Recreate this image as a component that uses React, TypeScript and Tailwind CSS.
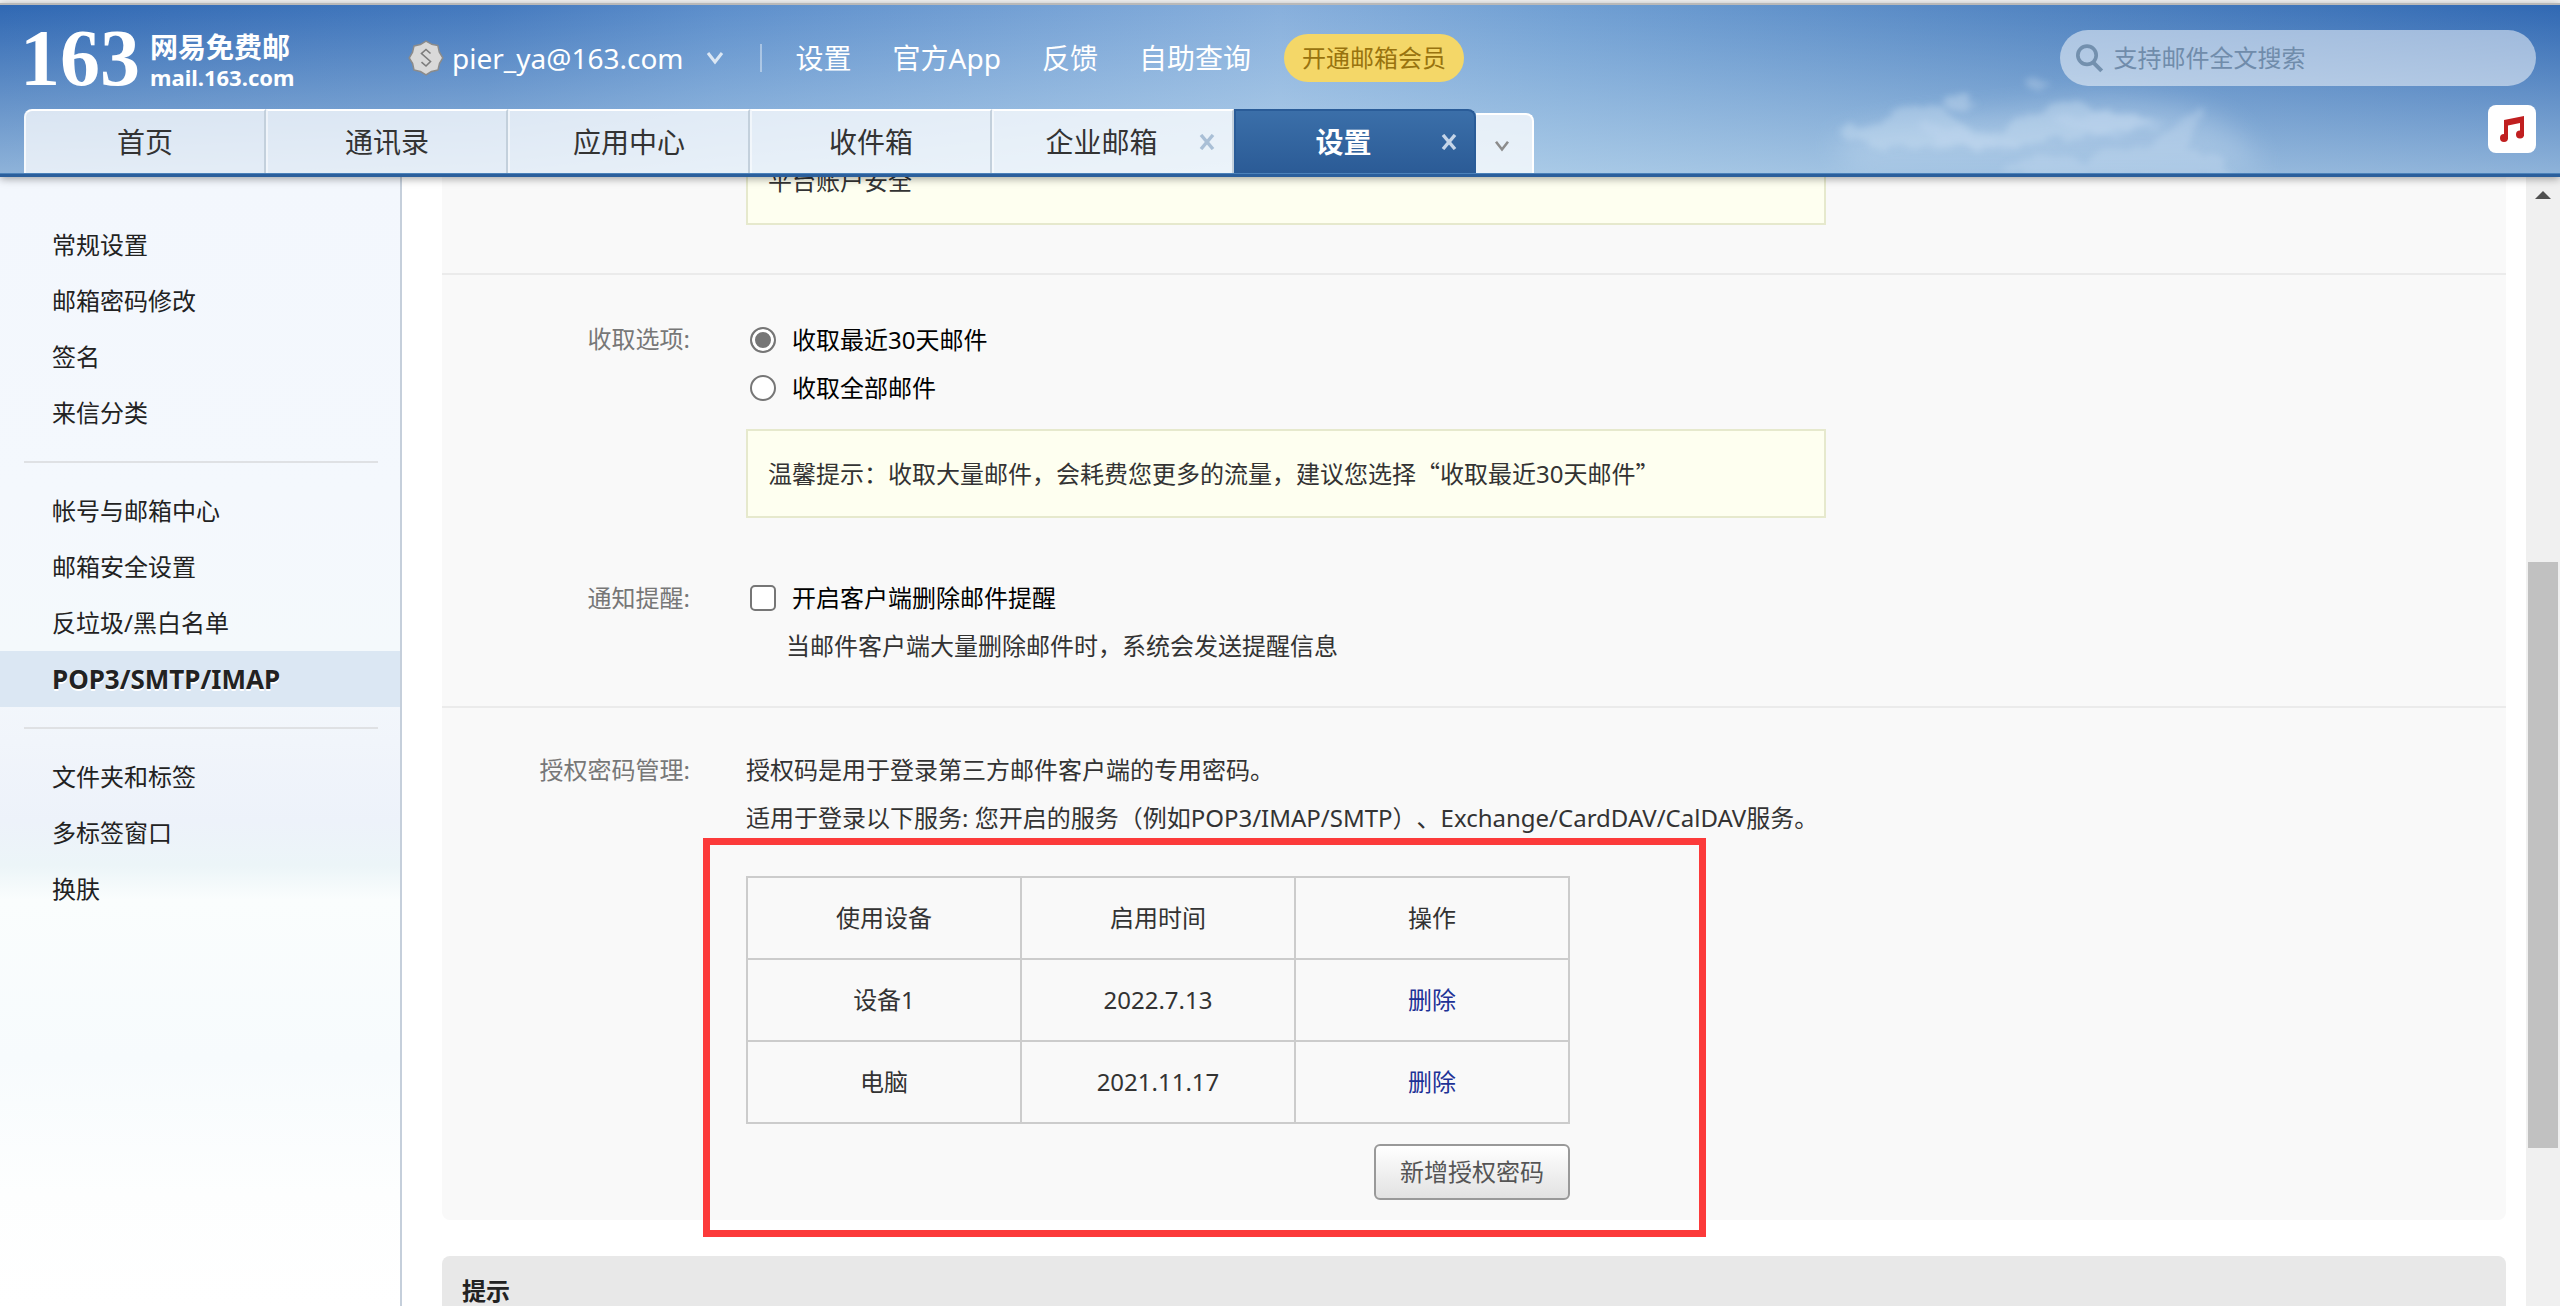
import React from "react";

type Tab = { label: string; closable?: boolean; active?: boolean };

const tabs: Tab[] = [
  { label: "首页" },
  { label: "通讯录" },
  { label: "应用中心" },
  { label: "收件箱" },
  { label: "企业邮箱", closable: true },
  { label: "设置", closable: true, active: true },
];

const topLinks = ["设置", "官方App", "反馈", "自助查询"];

const menuGroups: string[][] = [
  ["常规设置", "邮箱密码修改", "签名", "来信分类"],
  ["帐号与邮箱中心", "邮箱安全设置", "反垃圾/黑白名单", "POP3/SMTP/IMAP"],
  ["文件夹和标签", "多标签窗口", "换肤"],
];

const devices = [
  { name: "设备1", date: "2022.7.13" },
  { name: "电脑", date: "2021.11.17" },
];

function Clouds() {
  return (
    <svg
      className="pointer-events-none absolute bottom-0 left-[70%] h-[120px] w-[520px]"
      viewBox="0 0 520 120"
      aria-hidden="true"
    >
      <defs>
        <filter id="cloud" x="-10%" y="-20%" width="120%" height="140%">
          <feTurbulence type="fractalNoise" baseFrequency="0.05 0.07" numOctaves="5" seed="11" result="n" />
          <feDisplacementMap in="SourceGraphic" in2="n" scale="18" xChannelSelector="R" yChannelSelector="G" />
          <feGaussianBlur stdDeviation="3" />
        </filter>
        <filter id="haze" x="-20%" y="-40%" width="140%" height="180%">
          <feGaussianBlur stdDeviation="14" />
        </filter>
      </defs>
      <path
        d="M40 84 C110 60 150 64 220 56 C290 40 350 40 410 56 C440 66 460 90 470 112 L60 112 Z"
        fill="#c6dcf0"
        opacity="0.4"
        filter="url(#haze)"
      />
      <g fill="#cfe2f3" filter="url(#cloud)">
        <path
          d="M46 72 C66 62 84 74 96 62 C104 46 120 50 128 56 C138 44 158 44 156 52 C148 62 170 66 178 74 C192 78 204 78 212 74 C224 58 240 60 252 52 C270 38 290 46 300 52 C320 58 340 54 362 62 C350 76 330 70 310 76 C300 88 250 80 226 90 C160 92 100 94 60 84 Z"
          opacity="0.36"
        />
        <path
          d="M210 112 C240 96 270 96 296 104 C310 88 340 98 366 84 C378 72 396 58 410 52 C416 58 392 80 400 92 C420 98 440 104 440 120 L240 120 Z"
          opacity="0.28"
        />
        <path d="M128 66 C170 72 190 84 240 86 C200 100 150 96 128 66 Z" opacity="0.2" />
        <path d="M260 60 C300 52 350 60 380 66 C350 84 290 86 260 60 Z" opacity="0.2" />
        <path d="M150 42 C160 34 168 46 192 44 C180 52 160 50 150 42 Z" opacity="0.4" />
        <path d="M232 24 C240 20 250 28 258 30 C246 34 238 32 232 24 Z" opacity="0.3" />
      </g>
    </svg>
  );
}

function Logo() {
  return (
    <a href="#home" className="flex w-[380px] shrink-0 items-center gap-2.5 text-white" aria-label="163 网易免费邮">
      <span className="font-['Liberation_Serif',serif] text-[80px] leading-[60px] font-bold">163</span>
      <span className="flex flex-col pt-1.5">
        <span className="text-[28px] leading-8 font-bold">网易免费邮</span>
        <span className="text-[22px] leading-7 font-bold">mail.163.com</span>
      </span>
    </a>
  );
}

function Seal() {
  return (
    <svg viewBox="0 0 36 36" className="size-9" aria-hidden="true">
      <path
        d="M18 1.2 L23.6 4.2 L29.9 5.6 L31.3 12 L34.8 17.9 L31.5 23.5 L30 29.9 L23.5 31.4 L18 34.8 L12.4 31.5 L6 30 L4.6 23.5 L1.2 18 L4.5 12.3 L6 6 L12.3 4.6 Z"
        fill="#d9d9d9"
        stroke="#8b8b8b"
        strokeWidth="1.5"
        strokeLinejoin="round"
      />
      <path d="M22.5 13.5 L18 9.5 L13.5 13.5 L22.5 21.5 L18 26 L13.5 22.2" fill="none" stroke="#7c7c7c" strokeWidth="1.6" />
    </svg>
  );
}

function Chevron({ className }: { className: string }) {
  return (
    <svg viewBox="0 0 18 14" className={className} aria-hidden="true">
      <path d="M2 2 L9 11 L16 2" fill="none" stroke="currentColor" strokeWidth="3" />
    </svg>
  );
}

function Header() {
  return (
    <header className="relative z-10 shrink-0 border-t-2 border-[#b9b9b9] bg-[linear-gradient(to_bottom,rgba(208,231,244,0),rgba(208,231,244,0.6)),linear-gradient(to_right,#3068b3,#4479be_19%,#5c8ecb_28%,#87afdc_50%,#709fd3_61%,#5083c1_80%,#3068b3)] shadow-[0_2px_8px_rgba(0,0,0,0.35)]">
      <Clouds />
      <div className="relative flex h-[100px] items-center justify-between pt-1.5 pr-6 pl-5">
        <div className="flex items-center">
          <Logo />
          <div className="flex items-center pl-2">
            <Seal />
            <button type="button" className="ml-2 flex items-center gap-[22px] text-[28px] leading-9 text-white">
              pier_ya@163.com
              <Chevron className="h-3.5 w-[18px] text-white/75" />
            </button>
          </div>
          <span className="mr-[34px] ml-9 h-7 w-0.5 bg-white/40" />
          <nav className="flex items-center gap-[41px] text-[28px] leading-9 text-white">
            {topLinks.map((t) => (
              <a key={t} href="#link">
                {t}
              </a>
            ))}
          </nav>
          <button type="button" className="ml-[33px] h-12 rounded-full bg-[#f4d768] px-[18px] text-2xl text-[#98730f]">
            开通邮箱会员
          </button>
        </div>
        <label className="flex h-14 w-[476px] items-center gap-2.5 rounded-full bg-white/50 pl-4">
          <svg viewBox="0 0 30 30" className="size-[30px] text-[#7390ae]" aria-hidden="true">
            <circle cx="12" cy="12" r="10" fill="none" stroke="currentColor" strokeWidth="4" />
            <path d="M19 20 L28 29" stroke="currentColor" strokeWidth="4.5" />
          </svg>
          <input
            type="text"
            aria-label="搜索邮件"
            placeholder="支持邮件全文搜索"
            className="w-full bg-transparent text-2xl outline-none placeholder:text-[#708cab]"
          />
        </label>
      </div>
      <div className="relative flex h-[68px] justify-between pr-6 pl-6">
        <div className="flex items-end">
          {tabs.map((t, i) => (
            <div
              key={t.label}
              className={
                t.active
                  ? "flex h-16 w-[242px] items-center rounded-tr-lg border-2 border-b-0 border-[#2a5c98] bg-linear-to-b from-[#3b6fa9] to-[#2b5b96] text-white"
                  : i === 0
                    ? "flex h-16 w-[242px] items-center rounded-tl-lg border-t-2 border-r-2 border-l-2 border-t-white border-r-[#c3d0dc] border-l-white/70 bg-white/75 text-[#333]"
                    : "flex h-16 w-[242px] items-center border-t-2 border-r-2 border-l-2 border-t-white border-r-[#c3d0dc] border-l-white/50 bg-white/75 text-[#333]"
              }
            >
              <button
                type="button"
                className={t.active ? "flex-1 pl-3 text-[28px] leading-9 font-bold" : t.closable ? "flex-1 pl-3 text-[28px] leading-9" : "flex-1 text-[28px] leading-9"}
              >
                {t.label}
              </button>
              {t.closable && (
                <button type="button" aria-label={"关闭" + t.label} className="mr-[15px] flex size-5 items-center justify-center">
                  <svg viewBox="0 0 16 16" className={t.active ? "size-4 text-[#c5d5e8]" : "size-4 text-[#a9bfd6]"} aria-hidden="true">
                    <path d="M2 1 L14 15 M14 1 L2 15" stroke="currentColor" strokeWidth="3.4" />
                  </svg>
                </button>
              )}
            </div>
          ))}
          <button
            type="button"
            aria-label="更多标签"
            className="flex h-[60px] w-[58px] items-center justify-center rounded-tr-lg border-t-2 border-r-2 border-white bg-white/75 pt-1 pr-1"
          >
            <Chevron className="h-3 w-4 text-[#8c8c8c]" />
          </button>
        </div>
        <button type="button" aria-label="音乐" className="flex size-12 items-center justify-center rounded-lg bg-white">
          <svg viewBox="0 0 26 28" className="h-7 w-[26px]" aria-hidden="true">
            <path d="M5 5 L25 1 V21 H21 V8 L9 10.5 V24 H5 Z" fill="#c01f20" />
            <circle cx="5" cy="23" r="4" fill="#c01f20" />
            <circle cx="21" cy="19.5" r="4" fill="#c01f20" />
          </svg>
        </button>
      </div>
      <div className="relative h-1 border-t border-[#4c82ba] bg-[#2b5f9c]" />
    </header>
  );
}

function Sidebar() {
  return (
    <aside className="w-[402px] shrink-0 border-r-2 border-[#c5cfdb] bg-[linear-gradient(to_bottom,#f3f7fd,#f4f8fd_28%,#f4f9fc_42%,#f1f5fb_50%,#edf2fa_57%,#ecf5f8_61%,#fafdfd_64%,#f7fbfd_78%,#fdfefe_90%,#ffffff)] pt-10">
      {menuGroups.map((group, gi) => (
        <React.Fragment key={gi}>
          {gi > 0 && <hr className="my-5 mr-[22px] ml-6 border-t-2 border-[#dfe1e4]" />}
          <nav>
            {group.map((item) => (
              <a
                key={item}
                href="#settings"
                className={
                  item === "POP3/SMTP/IMAP"
                    ? "block bg-[#dbe7f3] pl-[52px] text-[26px] leading-14 font-bold text-[#222] [text-shadow:0_2px_0_#fff]"
                    : "block pl-[52px] text-2xl leading-14 text-[#222]"
                }
              >
                {item}
              </a>
            ))}
          </nav>
        </React.Fragment>
      ))}
    </aside>
  );
}

function Field({ label, children }: { label: string; children: React.ReactNode }) {
  return (
    <div className="flex">
      <div className="w-[304px] shrink-0 pr-14 text-right text-[#777]">{label}</div>
      <div className="min-w-0 flex-1">{children}</div>
    </div>
  );
}

function Tip({ children }: { children: React.ReactNode }) {
  return <p className="max-w-[1080px] border-2 border-[#e6e9cd] bg-[#fefff0] px-5 py-[18px] text-[#333]">{children}</p>;
}

const radioClass =
  "size-[26px] appearance-none rounded-full border-2 border-[#767676] bg-white checked:bg-[#767676] checked:shadow-[inset_0_0_0_3px_white]";
const cellClass = "h-[82px] border-2 border-[#ccc] text-center font-normal";
const quoteClass = "font-['Noto_Sans_CJK_SC',sans-serif]";

function Content() {
  return (
    <main className="min-w-0 flex-1 overflow-hidden bg-white pr-5 pl-10">
      <div className="-mt-10 rounded-lg bg-[#f9f9f9] text-2xl leading-12 text-[#333] [text-spacing-trim:space-all]">
        <section className="border-b-2 border-[#ebebeb] pb-12">
          <Field label="">
            <Tip>平台账户安全</Tip>
          </Field>
        </section>

        <section className="border-b-2 border-[#ebebeb] pt-10 pb-9">
          <Field label="收取选项:">
            <div className="pt-px text-black">
              <label className="ml-1 flex w-fit items-center gap-4">
                <input type="radio" name="range" defaultChecked className={radioClass} />
                收取最近30天邮件
              </label>
              <label className="ml-1 flex w-fit items-center gap-4">
                <input type="radio" name="range" className={radioClass} />
                收取全部邮件
              </label>
            </div>
            <div className="mt-[17px]">
              <Tip>
                温馨提示：收取大量邮件，会耗费您更多的流量，建议您选择<span className={quoteClass}>“</span>收取最近30天邮件
                <span className={quoteClass}>”</span>
              </Tip>
            </div>
          </Field>
          <div className="mt-14">
            <Field label="通知提醒:">
              <label className="ml-1 flex w-fit items-center gap-4 text-black">
                <input
                  type="checkbox"
                  className="size-[26px] appearance-none rounded-[5px] border-2 border-[#767676] bg-white checked:bg-[#767676]"
                />
                开启客户端删除邮件提醒
              </label>
              <p className="pl-10">当邮件客户端大量删除邮件时，系统会发送提醒信息</p>
            </Field>
          </div>
        </section>

        <section className="pt-[38px] pb-5">
          <Field label="授权密码管理:">
            <p>授权码是用于登录第三方邮件客户端的专用密码。</p>
            <p>适用于登录以下服务: 您开启的服务（例如POP3/IMAP/SMTP）、Exchange/CardDAV/CalDAV服务。</p>
            <div className="relative mt-[34px] w-[824px]">
              <table className="w-full table-fixed border-collapse">
                <thead>
                  <tr>
                    <th className={cellClass}>使用设备</th>
                    <th className={cellClass}>启用时间</th>
                    <th className={cellClass}>操作</th>
                  </tr>
                </thead>
                <tbody>
                  {devices.map((d) => (
                    <tr key={d.name}>
                      <td className={cellClass}>{d.name}</td>
                      <td className={cellClass}>{d.date}</td>
                      <td className={cellClass}>
                        <a href="#delete" className="text-[#1e3296]">
                          删除
                        </a>
                      </td>
                    </tr>
                  ))}
                </tbody>
              </table>
              <div className="mt-5 flex justify-end">
                <button
                  type="button"
                  className="h-14 rounded-md border-2 border-[#999] bg-linear-to-b from-white to-[#e2e2e2] px-6 leading-10 text-[#555]"
                >
                  新增授权密码
                </button>
              </div>
              <div className="pointer-events-none absolute -top-[38px] -right-[136px] -bottom-[37px] -left-[43px] border-7 border-[#fc3a3a]" />
            </div>
          </Field>
        </section>
      </div>
      <section className="mt-9 rounded-t-lg bg-[#e8e8e8] px-5 py-[11px]">
        <h2 className="text-2xl leading-12 font-bold text-[#222]">提示</h2>
      </section>
    </main>
  );
}

function ScrollRail() {
  return (
    <div className="flex w-[34px] shrink-0 flex-col items-center bg-[#f0f0f0] pt-3.5">
      <svg viewBox="0 0 16 8" className="h-2 w-4" aria-hidden="true">
        <path d="M8 0 L16 8 H0 Z" fill="#505050" />
      </svg>
      <div className="mt-[363px] h-[586px] w-[30px] bg-[#c1c1c1]" />
    </div>
  );
}

export default function App() {
  return (
    <div className="flex h-screen flex-col overflow-hidden bg-[#f3f3f3] pt-[3px] font-['Noto_Sans','Noto_Sans_CJK_SC',sans-serif]">
      <Header />
      <div className="flex min-h-0 flex-1">
        <Sidebar />
        <Content />
        <ScrollRail />
      </div>
    </div>
  );
}
